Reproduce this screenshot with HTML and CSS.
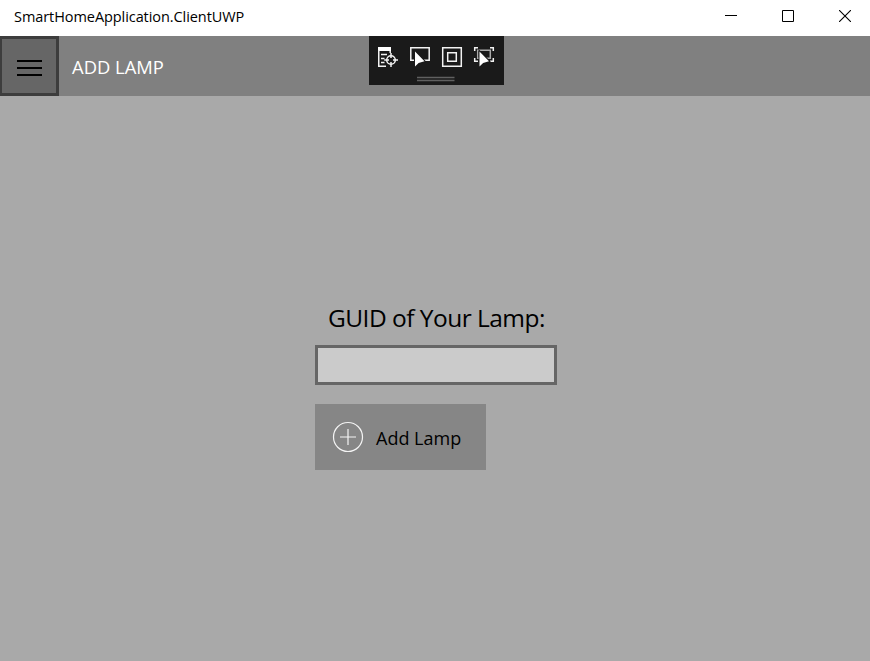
FILE: index.html
```html
<!DOCTYPE html>
<html lang="en">
<head>
<meta charset="utf-8">
<title>SmartHomeApplication.ClientUWP</title>
<link rel="stylesheet" href="styles.css">
</head>
<body>
<div class="window">
  <header class="titlebar">
    <span class="app-title">SmartHomeApplication.ClientUWP</span>
    <div class="controls">
      <svg width="12" height="12"><path d="M0 5.5H12"/></svg>
      <svg width="12" height="12"><path d="M.5 .5H11.5V11.5H.5Z"/></svg>
      <svg width="12" height="12" class="close"><path d="M0 0L12 12M12 0L0 12"/></svg>
    </div>
  </header>
  <nav class="appbar">
    <button class="menu" aria-label="Menu"><i></i><i></i><i></i></button>
    <span class="page-title">ADD LAMP</span>
    <div class="debugbar">
      <svg width="135" height="49">
        <path class="solid" d="M9 11H22V15H9Z"/>
        <path d="M9.75 14V30.2H17M21.2 15V17M12 18.5H18M12 22.5H15.5M12 26.5H15.5"/>
        <circle cx="22" cy="24" r="4.3"/><path d="M22 17V22M22 26V31M15.2 24H20M24 24H29"/>
        <path d="M45 24.2H41.8V11.8H60.2V24.2H54"/>
        <path class="cursor" d="M46 15.5V30.5L49.6 27L55.5 25.2Z"/>
        <path d="M73.7 11.7H92.3V30.3H73.7ZM78.7 16.7H87.3V25.3H78.7Z"/>
        <path d="M105.7 15V11.7H109M121 11.7H124.3V15M105.7 22V25.3H109M124.3 22V25.3H121"/>
        <path class="dim" d="M111 22.2H108.7V14.2H121.3V22.2H117"/>
        <path class="cursor" d="M110.5 15.5V30.5L114.1 27L120 25.2Z"/>
        <path class="grip" d="M48 41.5H85.5M48 44.5H85.5"/>
      </svg>
    </div>
  </nav>
  <main>
    <form class="form">
      <label class="guid-label" for="guid">GUID of Your Lamp:</label>
      <input class="guid" id="guid" type="text">
      <button class="add" type="button">
        <svg width="32" height="32"><circle cx="16" cy="16" r="14.5"/><path d="M8 16H24M16 8V24"/></svg>
        <span class="add-text">Add Lamp</span>
      </button>
    </form>
  </main>
</div>
</body>
</html>
```
FILE: styles.css
```css
* { box-sizing: border-box; }
body { margin: 0; font-family: "Open Sans", "Noto Sans", sans-serif; color: #000; }
button { font: inherit; border: 0; padding: 0; border-radius: 0; }
svg { display: block; fill: none; }
.window { height: 661px; display: flex; flex-direction: column; background: #a9a9a9; overflow: hidden; }
.titlebar { height: 36px; background: #fff; display: flex; justify-content: space-between; padding: 0 19px 0 14px; }
.app-title { font-size: 14.5px; letter-spacing: -.07px; line-height: 34px; white-space: nowrap; }
.controls { display: flex; gap: 45px; padding-top: 10px; }
.controls svg { stroke: #000; stroke-width: 1; }
.controls .close { stroke-width: 1.1; }
.appbar { height: 60px; background: #808080; display: flex; position: relative; }
.menu { width: 59px; height: 60px; background: #666; border: 3px solid #3d3d3d; border-left-width: 2px; display: flex; flex-direction: column; align-items: flex-start; gap: 5px; padding: 21px 0 0 15px; }
.menu i { width: 25px; height: 2px; background: #000; }
.page-title { color: #fff; font-size: 18.4px; letter-spacing: 0; line-height: 62px; margin-left: 13px; white-space: nowrap; }
.debugbar { position: absolute; left: 369px; top: 0; width: 135px; height: 49px; background: #1a1a1a; }
.debugbar svg { stroke: #f2f2f2; stroke-width: 1.5; }
.debugbar .solid { fill: #fff; stroke: none; }
.debugbar .cursor { fill: #fff; stroke: #1a1a1a; stroke-width: 2; paint-order: stroke; }
.debugbar .dim { stroke: #aaa; }
.debugbar .grip { stroke: #606060; stroke-width: 1.4; }
main { flex: 1; padding: 204px 0 0 315px; }
.form { width: 242px; display: flex; flex-direction: column; align-items: flex-start; }
.guid-label { font-size: 24.5px; letter-spacing: -.53px; line-height: 36px; height: 45px; margin-left: 13px; white-space: nowrap; }
.guid { width: 242px; height: 40px; background: #cbcbcb; border: 3px solid #666; border-radius: 0; outline: 0; padding: 0 8px; }
.add { width: 171px; height: 66px; margin-top: 19px; background: #868686; display: flex; align-items: center; padding-left: 17px; gap: 12px; }
.add svg { stroke: #f4f4f4; stroke-width: 1.2; }
.add-text { font-size: 18px; line-height: 30px; padding-top: 1px; white-space: nowrap; }
```
